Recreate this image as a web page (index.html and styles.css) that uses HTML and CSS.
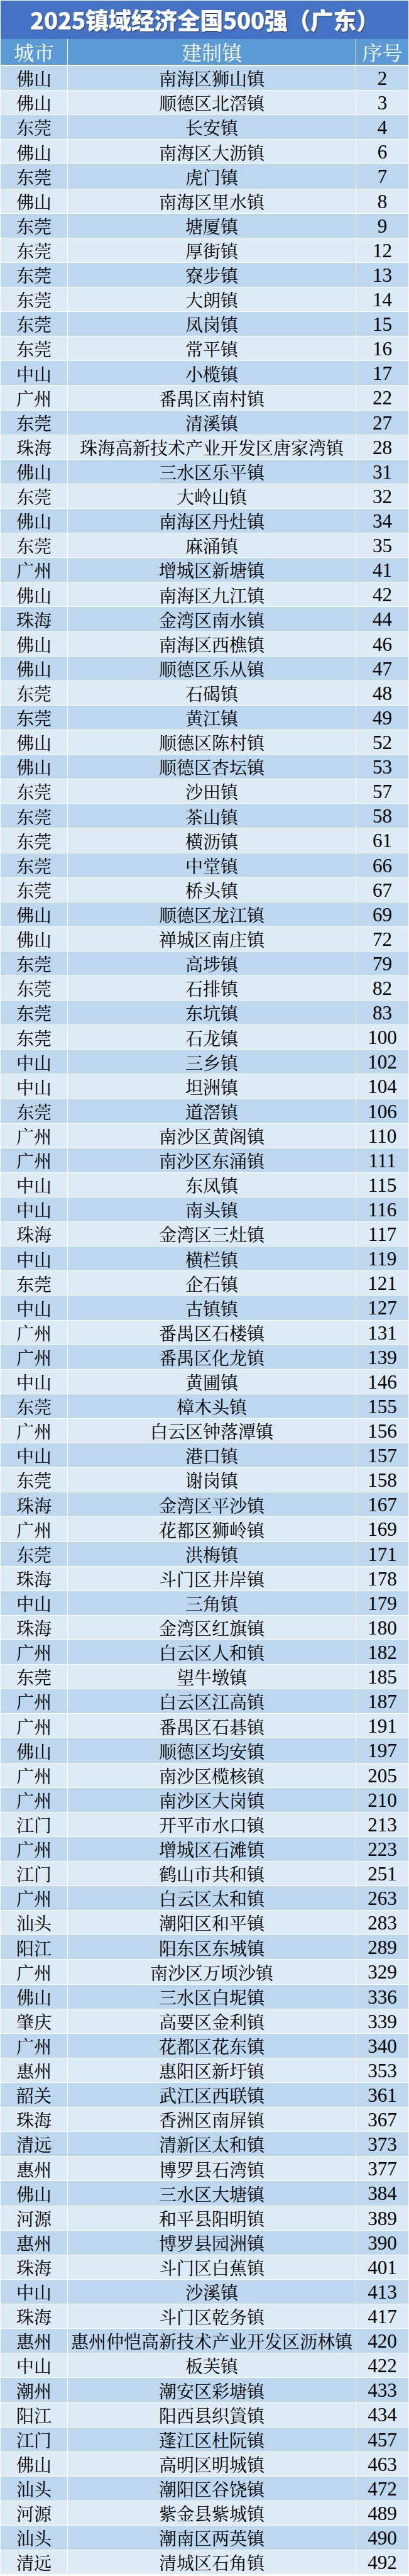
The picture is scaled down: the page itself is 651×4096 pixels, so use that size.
FILE: index.html
```html
<!DOCTYPE html>
<html lang="zh-CN">
<head>
<meta charset="utf-8">
<title>2025镇域经济全国500强（广东）</title>
<link rel="stylesheet" href="styles.css">
</head>
<body>
<div class="sheet">
  <div class="title">2025镇域经济全国500强（广东）</div>
  <div class="head">
    <div class="c">城市</div><div class="c">建制镇</div><div class="c">序号</div>
  </div>
  <div class="rows">
    <div class="row"><div class="c">佛山</div><div class="c">南海区狮山镇</div><div class="c n">2</div></div>
    <div class="row"><div class="c">佛山</div><div class="c">顺德区北滘镇</div><div class="c n">3</div></div>
    <div class="row"><div class="c">东莞</div><div class="c">长安镇</div><div class="c n">4</div></div>
    <div class="row"><div class="c">佛山</div><div class="c">南海区大沥镇</div><div class="c n">6</div></div>
    <div class="row"><div class="c">东莞</div><div class="c">虎门镇</div><div class="c n">7</div></div>
    <div class="row"><div class="c">佛山</div><div class="c">南海区里水镇</div><div class="c n">8</div></div>
    <div class="row"><div class="c">东莞</div><div class="c">塘厦镇</div><div class="c n">9</div></div>
    <div class="row"><div class="c">东莞</div><div class="c">厚街镇</div><div class="c n">12</div></div>
    <div class="row"><div class="c">东莞</div><div class="c">寮步镇</div><div class="c n">13</div></div>
    <div class="row"><div class="c">东莞</div><div class="c">大朗镇</div><div class="c n">14</div></div>
    <div class="row"><div class="c">东莞</div><div class="c">凤岗镇</div><div class="c n">15</div></div>
    <div class="row"><div class="c">东莞</div><div class="c">常平镇</div><div class="c n">16</div></div>
    <div class="row"><div class="c">中山</div><div class="c">小榄镇</div><div class="c n">17</div></div>
    <div class="row"><div class="c">广州</div><div class="c">番禺区南村镇</div><div class="c n">22</div></div>
    <div class="row"><div class="c">东莞</div><div class="c">清溪镇</div><div class="c n">27</div></div>
    <div class="row"><div class="c">珠海</div><div class="c">珠海高新技术产业开发区唐家湾镇</div><div class="c n">28</div></div>
    <div class="row"><div class="c">佛山</div><div class="c">三水区乐平镇</div><div class="c n">31</div></div>
    <div class="row"><div class="c">东莞</div><div class="c">大岭山镇</div><div class="c n">32</div></div>
    <div class="row"><div class="c">佛山</div><div class="c">南海区丹灶镇</div><div class="c n">34</div></div>
    <div class="row"><div class="c">东莞</div><div class="c">麻涌镇</div><div class="c n">35</div></div>
    <div class="row"><div class="c">广州</div><div class="c">增城区新塘镇</div><div class="c n">41</div></div>
    <div class="row"><div class="c">佛山</div><div class="c">南海区九江镇</div><div class="c n">42</div></div>
    <div class="row"><div class="c">珠海</div><div class="c">金湾区南水镇</div><div class="c n">44</div></div>
    <div class="row"><div class="c">佛山</div><div class="c">南海区西樵镇</div><div class="c n">46</div></div>
    <div class="row"><div class="c">佛山</div><div class="c">顺德区乐从镇</div><div class="c n">47</div></div>
    <div class="row"><div class="c">东莞</div><div class="c">石碣镇</div><div class="c n">48</div></div>
    <div class="row"><div class="c">东莞</div><div class="c">黄江镇</div><div class="c n">49</div></div>
    <div class="row"><div class="c">佛山</div><div class="c">顺德区陈村镇</div><div class="c n">52</div></div>
    <div class="row"><div class="c">佛山</div><div class="c">顺德区杏坛镇</div><div class="c n">53</div></div>
    <div class="row"><div class="c">东莞</div><div class="c">沙田镇</div><div class="c n">57</div></div>
    <div class="row"><div class="c">东莞</div><div class="c">茶山镇</div><div class="c n">58</div></div>
    <div class="row"><div class="c">东莞</div><div class="c">横沥镇</div><div class="c n">61</div></div>
    <div class="row"><div class="c">东莞</div><div class="c">中堂镇</div><div class="c n">66</div></div>
    <div class="row"><div class="c">东莞</div><div class="c">桥头镇</div><div class="c n">67</div></div>
    <div class="row"><div class="c">佛山</div><div class="c">顺德区龙江镇</div><div class="c n">69</div></div>
    <div class="row"><div class="c">佛山</div><div class="c">禅城区南庄镇</div><div class="c n">72</div></div>
    <div class="row"><div class="c">东莞</div><div class="c">高埗镇</div><div class="c n">79</div></div>
    <div class="row"><div class="c">东莞</div><div class="c">石排镇</div><div class="c n">82</div></div>
    <div class="row"><div class="c">东莞</div><div class="c">东坑镇</div><div class="c n">83</div></div>
    <div class="row"><div class="c">东莞</div><div class="c">石龙镇</div><div class="c n">100</div></div>
    <div class="row"><div class="c">中山</div><div class="c">三乡镇</div><div class="c n">102</div></div>
    <div class="row"><div class="c">中山</div><div class="c">坦洲镇</div><div class="c n">104</div></div>
    <div class="row"><div class="c">东莞</div><div class="c">道滘镇</div><div class="c n">106</div></div>
    <div class="row"><div class="c">广州</div><div class="c">南沙区黄阁镇</div><div class="c n">110</div></div>
    <div class="row"><div class="c">广州</div><div class="c">南沙区东涌镇</div><div class="c n">111</div></div>
    <div class="row"><div class="c">中山</div><div class="c">东凤镇</div><div class="c n">115</div></div>
    <div class="row"><div class="c">中山</div><div class="c">南头镇</div><div class="c n">116</div></div>
    <div class="row"><div class="c">珠海</div><div class="c">金湾区三灶镇</div><div class="c n">117</div></div>
    <div class="row"><div class="c">中山</div><div class="c">横栏镇</div><div class="c n">119</div></div>
    <div class="row"><div class="c">东莞</div><div class="c">企石镇</div><div class="c n">121</div></div>
    <div class="row"><div class="c">中山</div><div class="c">古镇镇</div><div class="c n">127</div></div>
    <div class="row"><div class="c">广州</div><div class="c">番禺区石楼镇</div><div class="c n">131</div></div>
    <div class="row"><div class="c">广州</div><div class="c">番禺区化龙镇</div><div class="c n">139</div></div>
    <div class="row"><div class="c">中山</div><div class="c">黄圃镇</div><div class="c n">146</div></div>
    <div class="row"><div class="c">东莞</div><div class="c">樟木头镇</div><div class="c n">155</div></div>
    <div class="row"><div class="c">广州</div><div class="c">白云区钟落潭镇</div><div class="c n">156</div></div>
    <div class="row"><div class="c">中山</div><div class="c">港口镇</div><div class="c n">157</div></div>
    <div class="row"><div class="c">东莞</div><div class="c">谢岗镇</div><div class="c n">158</div></div>
    <div class="row"><div class="c">珠海</div><div class="c">金湾区平沙镇</div><div class="c n">167</div></div>
    <div class="row"><div class="c">广州</div><div class="c">花都区狮岭镇</div><div class="c n">169</div></div>
    <div class="row"><div class="c">东莞</div><div class="c">洪梅镇</div><div class="c n">171</div></div>
    <div class="row"><div class="c">珠海</div><div class="c">斗门区井岸镇</div><div class="c n">178</div></div>
    <div class="row"><div class="c">中山</div><div class="c">三角镇</div><div class="c n">179</div></div>
    <div class="row"><div class="c">珠海</div><div class="c">金湾区红旗镇</div><div class="c n">180</div></div>
    <div class="row"><div class="c">广州</div><div class="c">白云区人和镇</div><div class="c n">182</div></div>
    <div class="row"><div class="c">东莞</div><div class="c">望牛墩镇</div><div class="c n">185</div></div>
    <div class="row"><div class="c">广州</div><div class="c">白云区江高镇</div><div class="c n">187</div></div>
    <div class="row"><div class="c">广州</div><div class="c">番禺区石碁镇</div><div class="c n">191</div></div>
    <div class="row"><div class="c">佛山</div><div class="c">顺德区均安镇</div><div class="c n">197</div></div>
    <div class="row"><div class="c">广州</div><div class="c">南沙区榄核镇</div><div class="c n">205</div></div>
    <div class="row"><div class="c">广州</div><div class="c">南沙区大岗镇</div><div class="c n">210</div></div>
    <div class="row"><div class="c">江门</div><div class="c">开平市水口镇</div><div class="c n">213</div></div>
    <div class="row"><div class="c">广州</div><div class="c">增城区石滩镇</div><div class="c n">223</div></div>
    <div class="row"><div class="c">江门</div><div class="c">鹤山市共和镇</div><div class="c n">251</div></div>
    <div class="row"><div class="c">广州</div><div class="c">白云区太和镇</div><div class="c n">263</div></div>
    <div class="row"><div class="c">汕头</div><div class="c">潮阳区和平镇</div><div class="c n">283</div></div>
    <div class="row"><div class="c">阳江</div><div class="c">阳东区东城镇</div><div class="c n">289</div></div>
    <div class="row"><div class="c">广州</div><div class="c">南沙区万顷沙镇</div><div class="c n">329</div></div>
    <div class="row"><div class="c">佛山</div><div class="c">三水区白坭镇</div><div class="c n">336</div></div>
    <div class="row"><div class="c">肇庆</div><div class="c">高要区金利镇</div><div class="c n">339</div></div>
    <div class="row"><div class="c">广州</div><div class="c">花都区花东镇</div><div class="c n">340</div></div>
    <div class="row"><div class="c">惠州</div><div class="c">惠阳区新圩镇</div><div class="c n">353</div></div>
    <div class="row"><div class="c">韶关</div><div class="c">武江区西联镇</div><div class="c n">361</div></div>
    <div class="row"><div class="c">珠海</div><div class="c">香洲区南屏镇</div><div class="c n">367</div></div>
    <div class="row"><div class="c">清远</div><div class="c">清新区太和镇</div><div class="c n">373</div></div>
    <div class="row"><div class="c">惠州</div><div class="c">博罗县石湾镇</div><div class="c n">377</div></div>
    <div class="row"><div class="c">佛山</div><div class="c">三水区大塘镇</div><div class="c n">384</div></div>
    <div class="row"><div class="c">河源</div><div class="c">和平县阳明镇</div><div class="c n">389</div></div>
    <div class="row"><div class="c">惠州</div><div class="c">博罗县园洲镇</div><div class="c n">390</div></div>
    <div class="row"><div class="c">珠海</div><div class="c">斗门区白蕉镇</div><div class="c n">401</div></div>
    <div class="row"><div class="c">中山</div><div class="c">沙溪镇</div><div class="c n">413</div></div>
    <div class="row"><div class="c">珠海</div><div class="c">斗门区乾务镇</div><div class="c n">417</div></div>
    <div class="row"><div class="c">惠州</div><div class="c">惠州仲恺高新技术产业开发区沥林镇</div><div class="c n">420</div></div>
    <div class="row"><div class="c">中山</div><div class="c">板芙镇</div><div class="c n">422</div></div>
    <div class="row"><div class="c">潮州</div><div class="c">潮安区彩塘镇</div><div class="c n">433</div></div>
    <div class="row"><div class="c">阳江</div><div class="c">阳西县织篢镇</div><div class="c n">434</div></div>
    <div class="row"><div class="c">江门</div><div class="c">蓬江区杜阮镇</div><div class="c n">457</div></div>
    <div class="row"><div class="c">佛山</div><div class="c">高明区明城镇</div><div class="c n">463</div></div>
    <div class="row"><div class="c">汕头</div><div class="c">潮阳区谷饶镇</div><div class="c n">472</div></div>
    <div class="row"><div class="c">河源</div><div class="c">紫金县紫城镇</div><div class="c n">489</div></div>
    <div class="row"><div class="c">汕头</div><div class="c">潮南区两英镇</div><div class="c n">490</div></div>
    <div class="row"><div class="c">清远</div><div class="c">清城区石角镇</div><div class="c n">492</div></div>
  </div>
</div>
</body>
</html>
```
FILE: styles.css
```css
html, body {
  margin: 0;
  padding: 0;
  background: #ffffff;
}
.sheet {
  width: 651px;
  padding: 1px 1px 0 1px;
  box-sizing: border-box;
  background: #ffffff;
  font-family: "Noto Serif CJK SC", "Noto Sans CJK SC", serif;
}
.title {
  height: 61px;
  background: #4472c4;
  color: #ffffff;
  display: flex;
  align-items: center;
  justify-content: center;
  font-family: "Noto Sans CJK SC", sans-serif;
  font-weight: 900;
  font-size: 37px;
  line-height: 1.2;
  letter-spacing: -0.5px;
  text-shadow: 1px 1px 1px rgba(20, 30, 60, 0.75);
}
.head, .row {
  display: grid;
  grid-template-columns: 106px 1fr 83px;
  column-gap: 1px;
  background: #ffffff;
}
.head {
  height: 41px;
  margin-bottom: 2px;
}
.head .c {
  background: #5b9bd5;
  color: #ffffff;
  font-size: 32px;
  font-weight: 400;
  line-height: 1.2;
  padding-top: 0;
}
.rows {
  display: grid;
  grid-auto-rows: 38.12px;
  row-gap: 1px;
}
.c {
  display: flex;
  align-items: center;
  justify-content: center;
  white-space: nowrap;
  font-size: 28px;
  color: #000000;
  line-height: 1.2;
  padding-top: 2px;
  box-sizing: border-box;
}
.row .c {
  background: #ddebf7;
}
.row:nth-child(odd) .c {
  background: #bdd7ee;
}
.n {
  font-family: "Liberation Serif", "Times New Roman", serif;
  font-size: 31px;
  line-height: 1.1;
}
```
